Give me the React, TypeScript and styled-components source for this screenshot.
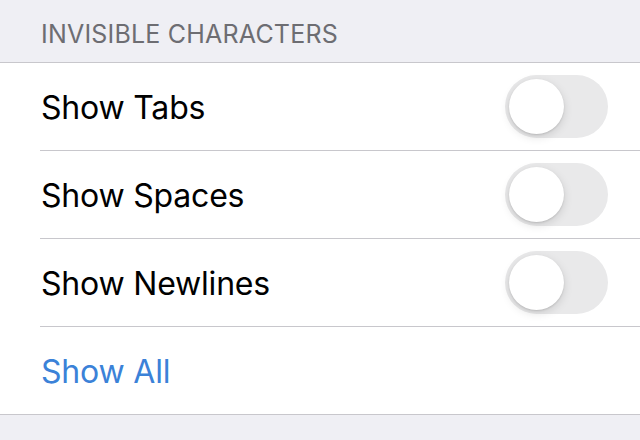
import React from 'react';
import styled, { createGlobalStyle } from 'styled-components';

const GlobalStyle = createGlobalStyle`
html, body {
    margin: 0;
    padding: 0;
    background: #efeff4;
    font-family: Inter, "Liberation Sans", sans-serif;
    -webkit-font-smoothing: antialiased;
}
`;

const Page = styled.div`
width: 640px;
height: 440px;
background: #efeff4;
overflow: hidden;
`;

const SectionHeader = styled.div`
height: 63px;
box-sizing: border-box;
padding: 19px 0 0 41px;
font-size: 25px;
letter-spacing: 0.2px;
color: #6d6d72;
border-bottom: 1px solid #c8c7cc;
`;

const Group = styled.div`
background: #fff;
border-bottom: 1px solid #c8c7cc;
padding-left: 40px;
`;

const Row = styled.div<{ $last?: boolean }>`
height: 87px;
display: flex;
align-items: center;
justify-content: space-between;
padding-right: 32px;
border-bottom: ${p => (p.$last ? 'none' : '1px solid #c8c7cc')};
`;

const Label = styled.span<{ $link?: boolean }>`
font-size: 32px;
color: ${p => (p.$link ? '#3b82d8' : '#000')};
padding: 2px 0 0 1px;
letter-spacing: -0.2px;
`;

const Track = styled.div`
width: 103px;
height: 63px;
border-radius: 32px;
background: #e9e9ea;
display: flex;
align-items: center;
padding-left: 4px;
box-sizing: border-box;
`;

const Knob = styled.div`
width: 55px;
height: 55px;
border-radius: 50%;
background: #fff;
box-shadow: 0 3px 10px rgba(0, 0, 0, 0.13), 0 1px 2px rgba(0, 0, 0, 0.12);
`;

const Toggle = () => (
    <Track>
        <Knob />
    </Track>
);

const items = ['Show Tabs', 'Show Spaces', 'Show Newlines'];

export default function App() {
    return (
        <Page>
            <GlobalStyle />
            <SectionHeader>INVISIBLE CHARACTERS</SectionHeader>
            <Group>
                {items.map(label => (
                    <Row key={label}>
                        <Label>{label}</Label>
                        <Toggle />
                    </Row>
                ))}
                <Row $last>
                    <Label $link>Show All</Label>
                </Row>
            </Group>
        </Page>
    );
}
